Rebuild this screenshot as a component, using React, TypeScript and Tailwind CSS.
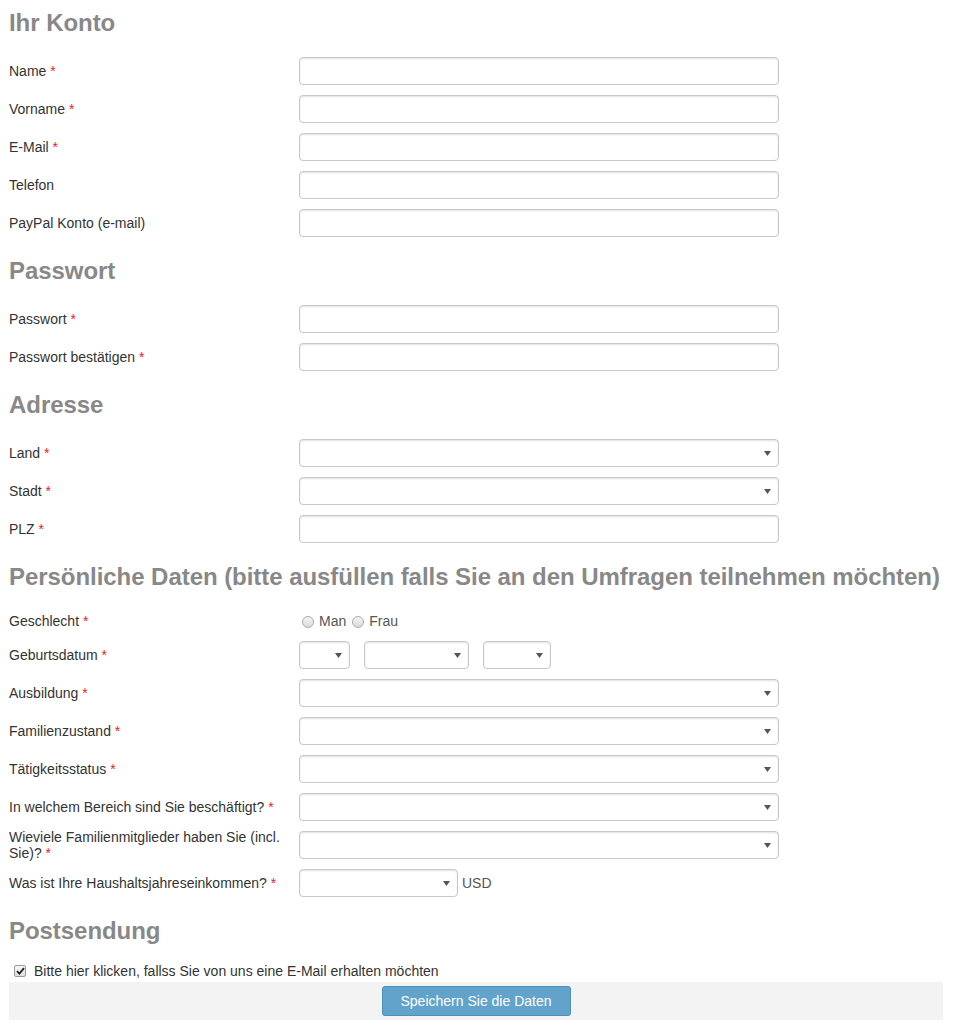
import React from "react";

const Req = () => <span className="text-[#e8202a]"> *</span>;

const boxCls =
  "h-[28px] rounded-[4px] border border-[#c8c8c8] bg-white shadow-[inset_0_1px_2px_rgba(0,0,0,0.12)]";

function TextInput() {
  return <div className={`${boxCls} w-[480px]`} />;
}

function Select({ w = "w-[480px]" }: { w?: string }) {
  return (
    <div className={`${boxCls} ${w} relative flex items-center justify-end pr-[7px]`}>
      <svg width="7" height="5" viewBox="0 0 7 5">
        <path d="M0 0 L7 0 L3.5 5 Z" fill="#555" />
      </svg>
    </div>
  );
}

function Row({ label, req, children }: { label: React.ReactNode; req?: boolean; children: React.ReactNode }) {
  return (
    <div className="flex h-[28px] items-center">
      <div className="w-[290px] shrink-0 pr-[12px] text-[14px] leading-[16px] text-[#333]">
        {label}
        {req && <Req />}
      </div>
      {children}
    </div>
  );
}

function Heading({ children, first }: { children: React.ReactNode; first?: boolean }) {
  return (
    <h2
      className={`${first ? "mt-[6px]" : "mt-[17px]"} mb-[17px] h-[34px] whitespace-nowrap text-[24px] font-bold leading-[34px] tracking-[-0.05px] text-[#888]`}
    >
      {children}
    </h2>
  );
}

function Radio({ label }: { label: string }) {
  return (
    <span className="flex items-center">
      <span className="inline-block h-[12px] w-[12px] rounded-full border border-[#aaa] bg-gradient-to-b from-[#f4f4f4] to-[#dcdcdc]" />
      <span className="ml-[5px] text-[14px] text-[#555]">{label}</span>
    </span>
  );
}

export default function App() {
  return (
    <div
      className="min-h-[1023px] bg-white px-[9px] pr-[15px]"
      style={{ fontFamily: '"Liberation Sans", Arial, sans-serif' }}
    >
      <Heading first>Ihr Konto</Heading>
      <div className="flex flex-col gap-[10px]">
        <Row label="Name" req><TextInput /></Row>
        <Row label="Vorname" req><TextInput /></Row>
        <Row label="E-Mail" req><TextInput /></Row>
        <Row label="Telefon"><TextInput /></Row>
        <Row label="PayPal Konto (e-mail)"><TextInput /></Row>
      </div>

      <Heading>Passwort</Heading>
      <div className="flex flex-col gap-[10px]">
        <Row label="Passwort" req><TextInput /></Row>
        <Row label="Passwort bestätigen" req><TextInput /></Row>
      </div>

      <Heading>Adresse</Heading>
      <div className="flex flex-col gap-[10px]">
        <Row label="Land" req><Select /></Row>
        <Row label="Stadt" req><Select /></Row>
        <Row label="PLZ" req><TextInput /></Row>
      </div>

      <Heading>Persönliche Daten (bitte ausfüllen falls Sie an den Umfragen teilnehmen möchten)</Heading>
      <div className="flex flex-col gap-[10px]">
        <div className="flex h-[20px] items-center">
          <div className="w-[290px] shrink-0 pr-[12px] text-[14px] leading-[16px] text-[#333]">
            Geschlecht<Req />
          </div>
          <div className="ml-[3px] flex items-center gap-[6px] pt-[1px]">
            <Radio label="Man" />
            <Radio label="Frau" />
          </div>
        </div>
        <Row label="Geburtsdatum" req>
          <div className="flex gap-[14px]">
            <Select w="w-[51px]" />
            <Select w="w-[105px]" />
            <Select w="w-[68px]" />
          </div>
        </Row>
        <Row label="Ausbildung" req><Select /></Row>
        <Row label="Familienzustand" req><Select /></Row>
        <Row label="Tätigkeitsstatus" req><Select /></Row>
        <Row label="In welchem Bereich sind Sie beschäftigt?" req><Select /></Row>
        <Row label="Wieviele Familienmitglieder haben Sie (incl. Sie)?" req><Select /></Row>
        <Row label="Was ist Ihre Haushaltsjahreseinkommen?" req>
          <div className="flex items-center">
            <Select w="w-[159px]" />
            <span className="ml-[4px] text-[14px] text-[#555]">USD</span>
          </div>
        </Row>
      </div>

      <Heading>Postsendung</Heading>
      <div className="-mt-[2px] flex h-[16px] items-center pl-[5px]">
        <span className="flex h-[12px] w-[12px] items-center justify-center rounded-[2px] border border-[#999] bg-gradient-to-b from-[#f8f8f8] to-[#dedede]">
          <svg width="9" height="8" viewBox="0 0 9 8">
            <path d="M1 4.2 L3.4 6.6 L8 1.2" stroke="#222" strokeWidth="1.8" fill="none" />
          </svg>
        </span>
        <span className="ml-[8px] text-[14px] text-[#333]">
          Bitte hier klicken, fallss Sie von uns eine E-Mail erhalten möchten
        </span>
      </div>
      <div className="mt-[3px] flex h-[38px] items-center justify-center bg-[#f3f3f3]">
        <button className="h-[30px] w-[189px] rounded-[3px] border border-[#4a8fbd] bg-[#62a3cb] text-[14px] text-white">
          Speichern Sie die Daten
        </button>
      </div>
    </div>
  );
}
